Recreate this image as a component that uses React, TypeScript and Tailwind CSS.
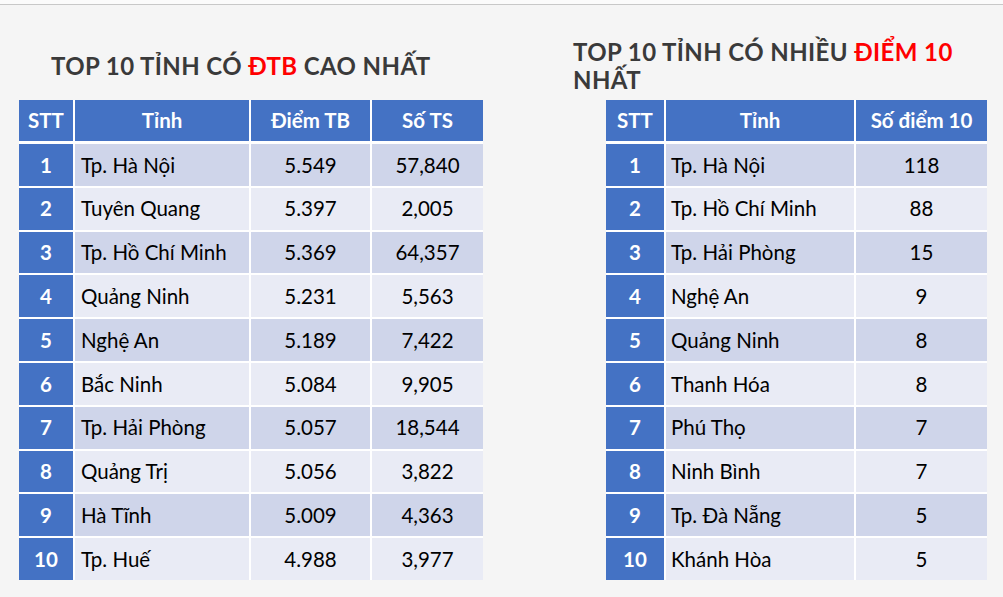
import React from "react";

const left = [
  ["1", "Tp. Hà Nội", "5.549", "57,840"],
  ["2", "Tuyên Quang", "5.397", "2,005"],
  ["3", "Tp. Hồ Chí Minh", "5.369", "64,357"],
  ["4", "Quảng Ninh", "5.231", "5,563"],
  ["5", "Nghệ An", "5.189", "7,422"],
  ["6", "Bắc Ninh", "5.084", "9,905"],
  ["7", "Tp. Hải Phòng", "5.057", "18,544"],
  ["8", "Quảng Trị", "5.056", "3,822"],
  ["9", "Hà Tĩnh", "5.009", "4,363"],
  ["10", "Tp. Huế", "4.988", "3,977"],
];

const right = [
  ["1", "Tp. Hà Nội", "118"],
  ["2", "Tp. Hồ Chí Minh", "88"],
  ["3", "Tp. Hải Phòng", "15"],
  ["4", "Nghệ An", "9"],
  ["5", "Quảng Ninh", "8"],
  ["6", "Thanh Hóa", "8"],
  ["7", "Phú Thọ", "7"],
  ["8", "Ninh Bình", "7"],
  ["9", "Tp. Đà Nẵng", "5"],
  ["10", "Khánh Hòa", "5"],
];

const font = { fontFamily: "Lato, 'Noto Sans', sans-serif" };

export default function App() {
  return (
    <div className="w-[1003px] h-[597px] bg-[#f5f5f5] overflow-hidden" style={font}>
      <div className="h-[4px] bg-[#fbfbfb]" />
      <div className="h-[1px] bg-[#c8c8c8]" />
      <div className="flex">
        {/* Left section */}
        <div className="ml-[19px] w-[464px] flex flex-col">
          <h2 className="mt-[47px] ml-[32px] h-[28px] leading-[28px] text-[24px] font-bold text-[#3a3a3a] whitespace-nowrap tracking-[0.4px]">
            TOP 10 TỈNH CÓ <span className="text-[#ff0000]">ĐTB</span> CAO NHẤT
          </h2>
          <div className="mt-[20px] bg-white flex flex-col gap-[2px] text-[20.5px]">
            <div className="flex gap-[2px] h-[41px] mb-[1px] bg-white text-white font-bold">
              <div className="w-[54px] bg-[#4472c4] flex items-center justify-center">STT</div>
              <div className="w-[174px] bg-[#4472c4] flex items-center justify-center">Tỉnh</div>
              <div className="w-[119px] bg-[#4472c4] flex items-center justify-center">Điểm TB</div>
              <div className="w-[111px] bg-[#4472c4] flex items-center justify-center">Số TS</div>
            </div>
            {left.map((r, i) => {
              const bg = i % 2 === 0 ? "bg-[#cfd5ea]" : "bg-[#e9ebf5]";
              return (
                <div key={r[0]} className="flex gap-[2px] h-[41.8px]">
                  <div className="w-[54px] bg-[#4472c4] text-white font-bold flex items-center justify-center">{r[0]}</div>
                  <div className={`w-[174px] ${bg} text-black flex items-center pl-[6px]`}>{r[1]}</div>
                  <div className={`w-[119px] ${bg} text-black flex items-center justify-center`}>{r[2]}</div>
                  <div className={`w-[111px] ${bg} text-black flex items-center justify-center`}>{r[3]}</div>
                </div>
              );
            })}
          </div>
        </div>

        {/* Right section */}
        <div className="ml-[90px] w-[414px] flex flex-col">
          <h2 className="mt-[33px] leading-[28px] text-[24px] font-bold text-[#3a3a3a] whitespace-nowrap tracking-[0.4px]">
            TOP 10 TỈNH CÓ NHIỀU <span className="text-[#ff0000]">ĐIỂM 10</span>
            <br />
            NHẤT
          </h2>
          <div className="mt-[6px] ml-[33px] w-[381px] bg-white flex flex-col gap-[2px] text-[20.5px]">
            <div className="flex gap-[2px] h-[41px] mb-[1px] text-white font-bold">
              <div className="w-[58px] bg-[#4472c4] flex items-center justify-center">STT</div>
              <div className="w-[188px] bg-[#4472c4] flex items-center justify-center">Tỉnh</div>
              <div className="w-[131px] bg-[#4472c4] flex items-center justify-center">Số điểm 10</div>
            </div>
            {right.map((r, i) => {
              const bg = i % 2 === 0 ? "bg-[#cfd5ea]" : "bg-[#e9ebf5]";
              return (
                <div key={r[0]} className="flex gap-[2px] h-[41.8px]">
                  <div className="w-[58px] bg-[#4472c4] text-white font-bold flex items-center justify-center">{r[0]}</div>
                  <div className={`w-[188px] ${bg} text-black flex items-center pl-[5px]`}>{r[1]}</div>
                  <div className={`w-[131px] ${bg} text-black flex items-center justify-center`}>{r[2]}</div>
                </div>
              );
            })}
          </div>
        </div>
      </div>
    </div>
  );
}
